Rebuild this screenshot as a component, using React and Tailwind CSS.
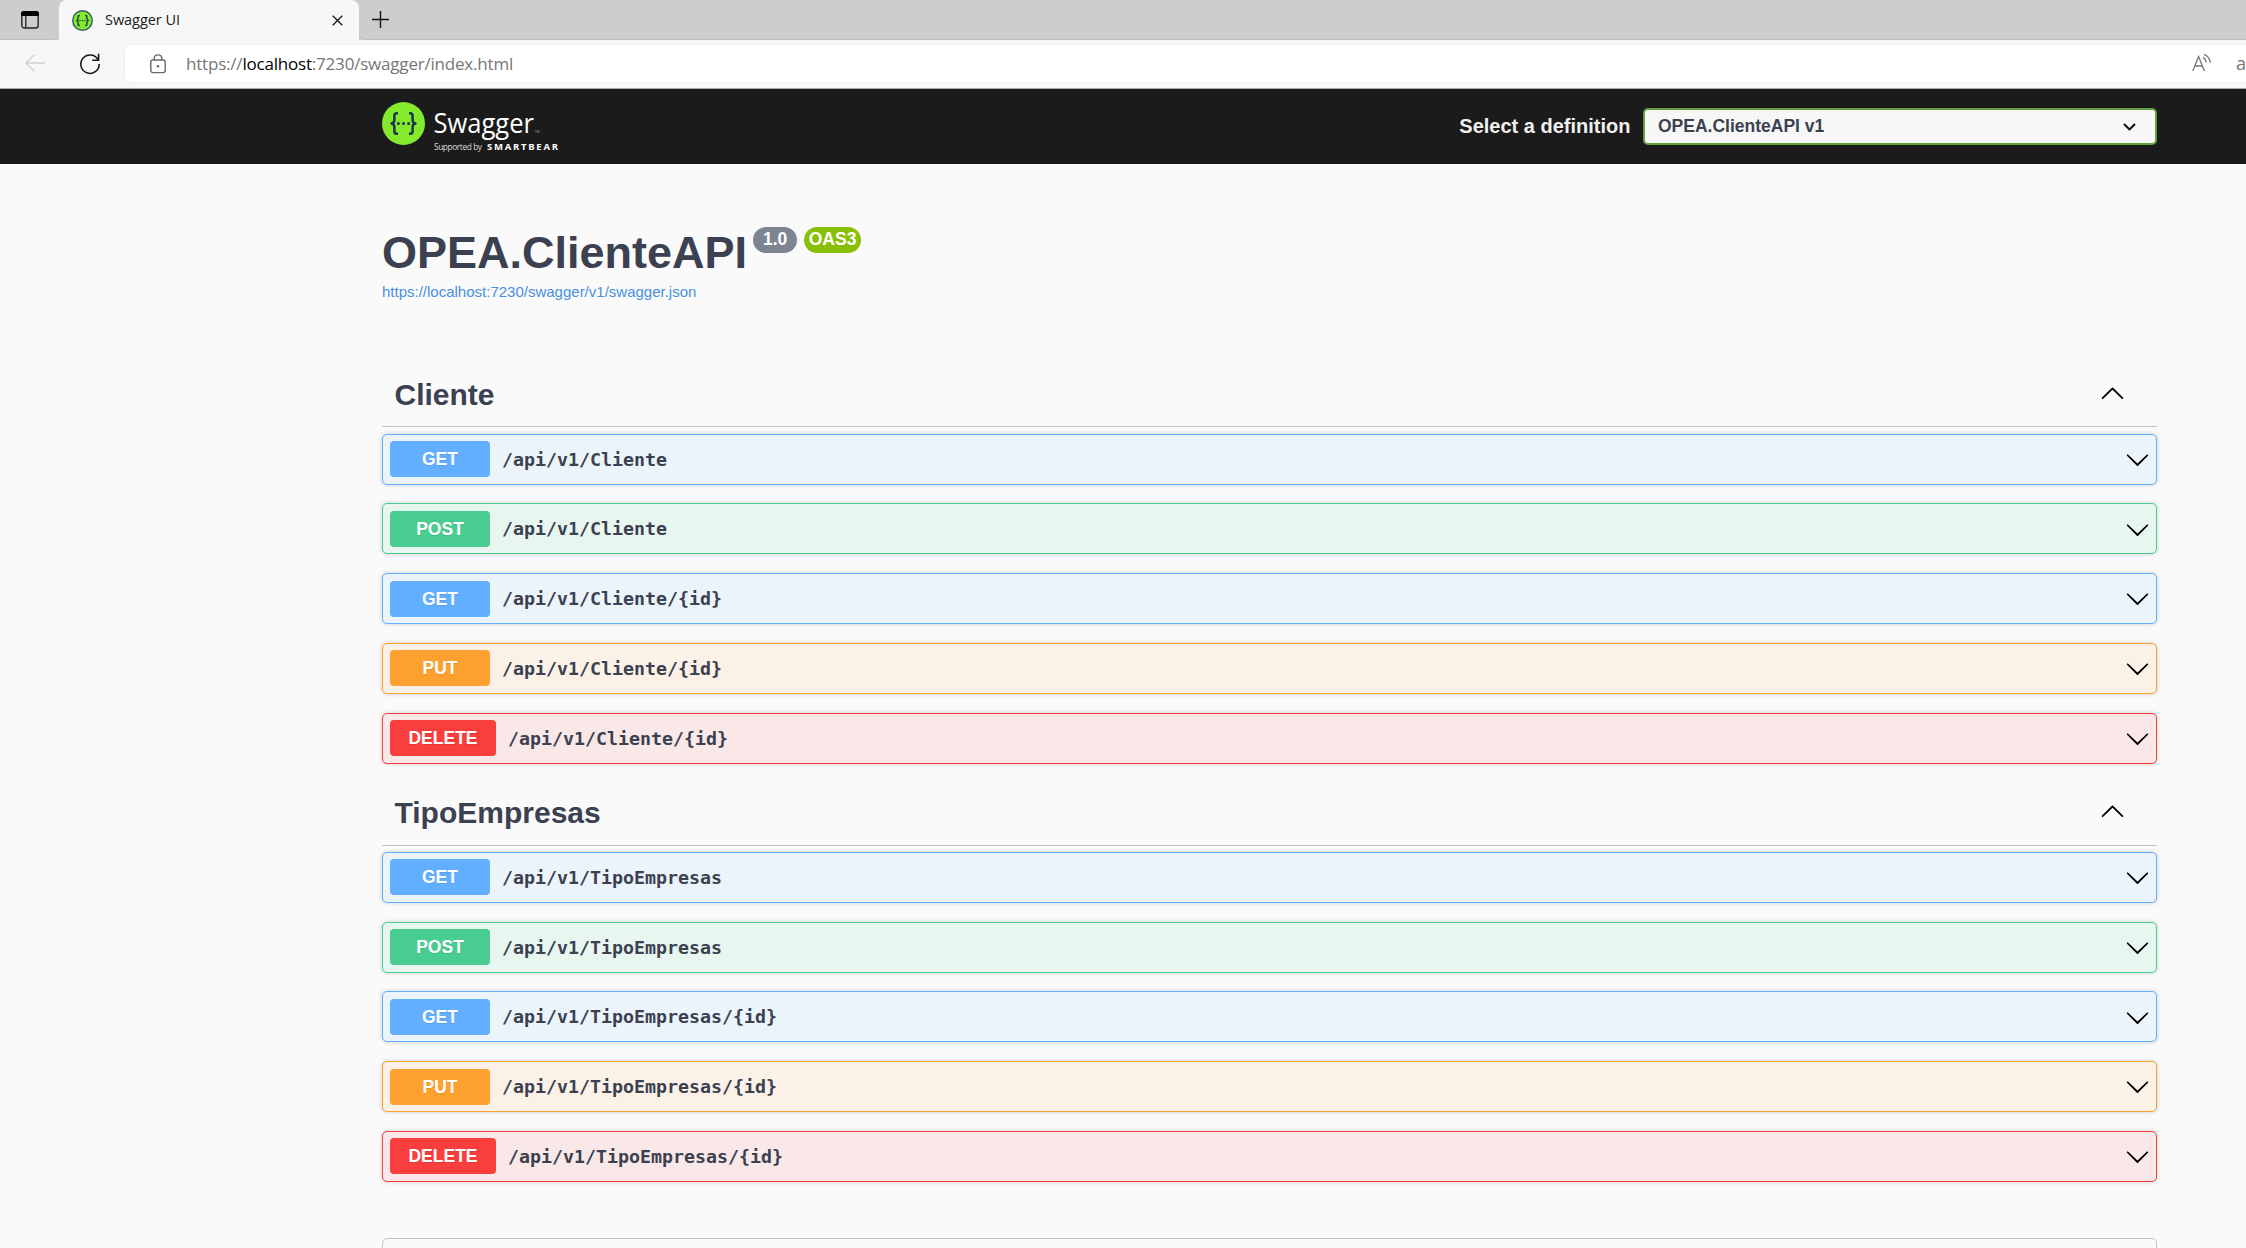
import React from "react";

const THEMES = {
  GET: { row: "bg-[#ebf3fb] border-[#61affe]", badge: "bg-[#61affe] w-[100px]" },
  POST: { row: "bg-[#e8f6f0] border-[#49cc90]", badge: "bg-[#49cc90] w-[100px]" },
  PUT: { row: "bg-[#fbf1e6] border-[#fca130]", badge: "bg-[#fca130] w-[100px]" },
  DELETE: { row: "bg-[#fae7e7] border-[#f93e3e]", badge: "bg-[#f93e3e] w-[106px]" },
};

const SECTIONS = ["Cliente", "TipoEmpresas"].map((name) => ({
  name,
  operations: [
    ["GET", `/api/v1/${name}`],
    ["POST", `/api/v1/${name}`],
    ["GET", `/api/v1/${name}/{id}`],
    ["PUT", `/api/v1/${name}/{id}`],
    ["DELETE", `/api/v1/${name}/{id}`],
  ],
}));

function ArrowDown({ className }) {
  return (
    <svg className={className} width="25" height="25" viewBox="0 0 20 20">
      <path d="M17.418 6.109c.272-.268.709-.268.979 0s.271.701 0 .969l-7.908 7.83c-.27.268-.707.268-.979 0l-7.908-7.83c-.27-.268-.27-.701 0-.969.271-.268.709-.268.979 0L10 13.25l7.418-7.141z" />
    </svg>
  );
}

function ArrowUp({ className }) {
  return (
    <svg className={className} width="25" height="25" viewBox="0 0 20 20">
      <path d="M17.418 14.908c.272.268.709.268.979 0s.271-.701 0-.969l-7.908-7.83c-.27-.268-.707-.268-.979 0l-7.908 7.83c-.27.268-.27.701 0 .969.271.268.709.268.979 0L10 7.767l7.418 7.141z" />
    </svg>
  );
}

function Braces({ stroke, width }) {
  return (
    <g fill="none" stroke={stroke} strokeWidth={width} strokeLinejoin="round">
      <path d="M16 11.2h-1.2q-2.4 0-2.4 2.6v4q0 3.4-3 3.7q3 .3 3 3.7v4q0 2.6 2.4 2.6H16" />
      <path d="M27 11.2h1.2q2.4 0 2.4 2.6v4q0 3.4 3 3.7q-3 .3-3 3.7v4q0 2.6-2.4 2.6H27" />
      <g fill={stroke} stroke="none">
        <circle cx="16.3" cy="21.5" r="1.5" />
        <circle cx="21.5" cy="21.5" r="1.5" />
        <circle cx="26.7" cy="21.5" r="1.5" />
      </g>
    </g>
  );
}

function TabStrip() {
  return (
    <div className="flex h-10 shrink-0 bg-[#cdcdcd]">
      <div className="flex h-10 w-[59px] items-center rounded-br-lg border-b border-[#bdbdbd] pl-[21px]">
        <svg width="18" height="19" viewBox="0 0 18 19">
          <rect x=".8" y="1.8" width="16.4" height="16.2" rx="2.6" fill="none" stroke="#222" strokeWidth="1.4" />
          <path d="M.2 6V3.4Q.2 1 2.8 1h12.4q2.6 0 2.6 2.4V6z" fill="#000" />
          <path d="M4.8 5v13" stroke="#222" strokeWidth="1.3" />
        </svg>
      </div>
      <div className="flex h-10 w-[300px] items-center rounded-t-lg bg-[#f7f7f7] pl-[13px]">
        <svg width="21" height="21" viewBox="0 0 43 43">
          <circle cx="21.5" cy="21.5" r="20" fill="#85ea2d" stroke="#35606b" strokeWidth="3" />
          <Braces stroke="#173647" width="2.8" />
        </svg>
        <span className="ml-[12px] w-[227px] whitespace-nowrap font-['Open_Sans'] text-[14.5px] leading-5 tracking-[-0.05px] text-[#1b1b1b]">
          Swagger UI
        </span>
        <svg className="mt-px" width="11" height="11" viewBox="0 0 12 12">
          <path d="M.8.8l10.4 10.4M11.2.8L.8 11.2" stroke="#1b1b1b" strokeWidth="1.5" />
        </svg>
      </div>
      <div className="flex flex-1 items-center rounded-bl-lg border-b border-[#bdbdbd] pl-[13px]">
        <svg width="17" height="17" viewBox="0 0 17 17">
          <path d="M8.5 0v17M0 8.5h17" stroke="#111" strokeWidth="1.4" />
        </svg>
      </div>
    </div>
  );
}

function AddressBar() {
  return (
    <div className="flex h-[49px] shrink-0 items-start border-b border-[#a8a8a8] bg-[#f7f7f7]">
      <svg className="ml-[25px] mt-[14px]" width="20" height="18" viewBox="0 0 20 18">
        <path d="M20 9H1M9.500 .6L1 9l8.500 8.400" fill="none" stroke="#cfcfcf" strokeWidth="1.4" />
      </svg>
      <svg className="ml-[35px] mt-[13px]" width="20" height="22" viewBox="0 0 20 22">
        <path d="M18.200 7A9.200 9.200 0 1 0 19.200 11M18.600 .8v6.400h-6.400" fill="none" stroke="#1b1b1b" strokeWidth="1.600" />
      </svg>
      <div className="ml-[25px] mt-[5px] flex h-[37px] flex-1 items-center rounded-l-md bg-white shadow-[0_0_2px_rgba(0,0,0,0.12)]">
        <svg className="ml-[25px]" width="16" height="20" viewBox="0 0 16 20">
          <g fill="none" stroke="#6b6b6b" strokeWidth="1.400">
            <rect x=".8" y="6" width="14.400" height="12.600" rx="2" />
            <path d="M4.200 6V4.300Q4.200 .9 8 .9t3.800 3.400V6" />
          </g>
          <circle cx="8" cy="12.300" r="1.300" fill="#6b6b6b" />
        </svg>
        <span className="ml-[20px] flex-1 whitespace-nowrap font-['Open_Sans'] text-[17px] leading-6 tracking-[-0.2px] text-[#767676]">
          https://<span className="text-black">localhost</span>:7230/swagger/index.html
        </span>
        <svg className="mb-[2px] mr-[24px]" width="20" height="20" viewBox="0 0 20 20">
          <g fill="none" stroke="#767676" strokeWidth="1.300">
            <path d="M.8 18L6.600 3.400 12.400 18M2.800 13h7.600" />
            <path d="M10.800 4.500q3 1.200 3.300 5M12 1.300q5.800 2.200 6.300 8.400" />
          </g>
        </svg>
        <span className="mb-[2px] w-[10px] overflow-hidden font-['Open_Sans'] text-[18px] leading-6 text-[#767676]">a</span>
      </div>
    </div>
  );
}

function TopBar() {
  return (
    <header className="flex h-[75px] shrink-0 items-center justify-between bg-[#1b1b1b] pl-[382px] pr-[89px]">
      <svg width="180" height="50" viewBox="0 0 180 50">
        <circle cx="21.500" cy="21.500" r="21.500" fill="#85ea2d" />
        <Braces stroke="#173647" width="2.500" />
        <g fill="#fff" fontFamily="Open Sans, sans-serif">
          <text x="51.500" y="31" fontSize="28" textLength="100.500" lengthAdjust="spacingAndGlyphs">Swagger</text>
          <text x="153" y="31" fontSize="3" fill="#aaa">TM</text>
          <text x="52" y="48" fontSize="8.300" fill="#ddd" textLength="48" lengthAdjust="spacing">Supported by</text>
          <text x="105" y="48" fontSize="9.500" fontWeight="700" textLength="71" lengthAdjust="spacing">SMARTBEAR</text>
        </g>
      </svg>
      <div className="flex items-center">
        <span className="mb-px mr-[12.5px] text-xl font-bold leading-6 text-[#f0f0f0]">Select a definition</span>
        <div className="flex h-[37px] w-[514px] items-center justify-between rounded-[5px] border-2 border-[#62a03f] bg-[#f7f7f7] pl-[13px] pr-[19px]">
          <span className="pb-px text-[17.5px] font-bold leading-5 text-[#3b4151]">OPEA.ClienteAPI v1</span>
          <svg width="13" height="8" viewBox="0 0 13 8">
            <path d="M1 1l5.500 5.400L12 1" fill="none" stroke="#000" strokeWidth="1.900" />
          </svg>
        </div>
      </div>
    </header>
  );
}

function Operation({ method, path }) {
  const theme = THEMES[method];
  return (
    <div className={`mb-[18.75px] flex h-[51px] items-start rounded-[5px] border pl-[7px] pr-[6px] shadow-[0_0_4px_rgba(0,0,0,0.19)] ${theme.row}`}>
      <span className={`mt-[6.4px] h-9 rounded-[4px] text-center text-[17.5px] font-bold leading-[36px] text-white [text-shadow:0_1px_0_rgba(0,0,0,0.1)] ${theme.badge}`}>
        {method}
      </span>
      <span className="ml-[12px] flex-1 font-['DejaVu_Sans_Mono',monospace] text-[18.27px] font-bold leading-[49px] text-[#3b4151]">
        {path}
      </span>
      <ArrowDown className="mt-[12.3px]" />
    </div>
  );
}

function Section({ name, operations }) {
  return (
    <section>
      <div className="mb-[6.35px] flex h-[63.1px] items-start justify-between border-b border-[rgba(59,65,81,0.3)] pl-[12.5px] pr-[32px]">
        <h2 className="mt-[13px] text-[30px] font-bold leading-9 text-[#3b4151]">{name}</h2>
        <ArrowUp className="mt-[16px]" />
      </div>
      {operations.map(([method, path]) => (
        <Operation key={method + path} method={method} path={path} />
      ))}
    </section>
  );
}

export default function App() {
  return (
    <div className="flex h-[1248px] w-full flex-col overflow-hidden bg-[#fafafa] font-['Liberation_Sans',Arial,sans-serif]">
      <TabStrip />
      <AddressBar />
      <TopBar />
      <main className="flex-1 overflow-hidden pl-[382px] pr-[89px]">
        <div className="flex items-start pt-[62px]">
          <h1 className="-mb-px mt-px text-[45px] font-bold leading-[52px] text-[#3b4151]">OPEA.ClienteAPI</h1>
          <span className="ml-[6px] mt-px h-[26px] w-[44px] rounded-full bg-[#7d8492] text-center text-[17.5px] font-bold leading-6 text-white">
            1.0
          </span>
          <span className="ml-[7px] mt-px h-[26px] w-[57px] rounded-full bg-[#89bf04] text-center text-[17.5px] font-bold leading-6 text-white">
            OAS3
          </span>
        </div>
        <a className="mb-[62.25px] mt-[4px] block text-[15px] leading-5 text-[#4990e2]">
          https://localhost:7230/swagger/v1/swagger.json
        </a>
        {SECTIONS.map((section) => (
          <Section key={section.name} {...section} />
        ))}
        <div className="mt-[56px] h-20 rounded-[5px] border border-[rgba(59,65,81,0.3)]" />
      </main>
    </div>
  );
}
